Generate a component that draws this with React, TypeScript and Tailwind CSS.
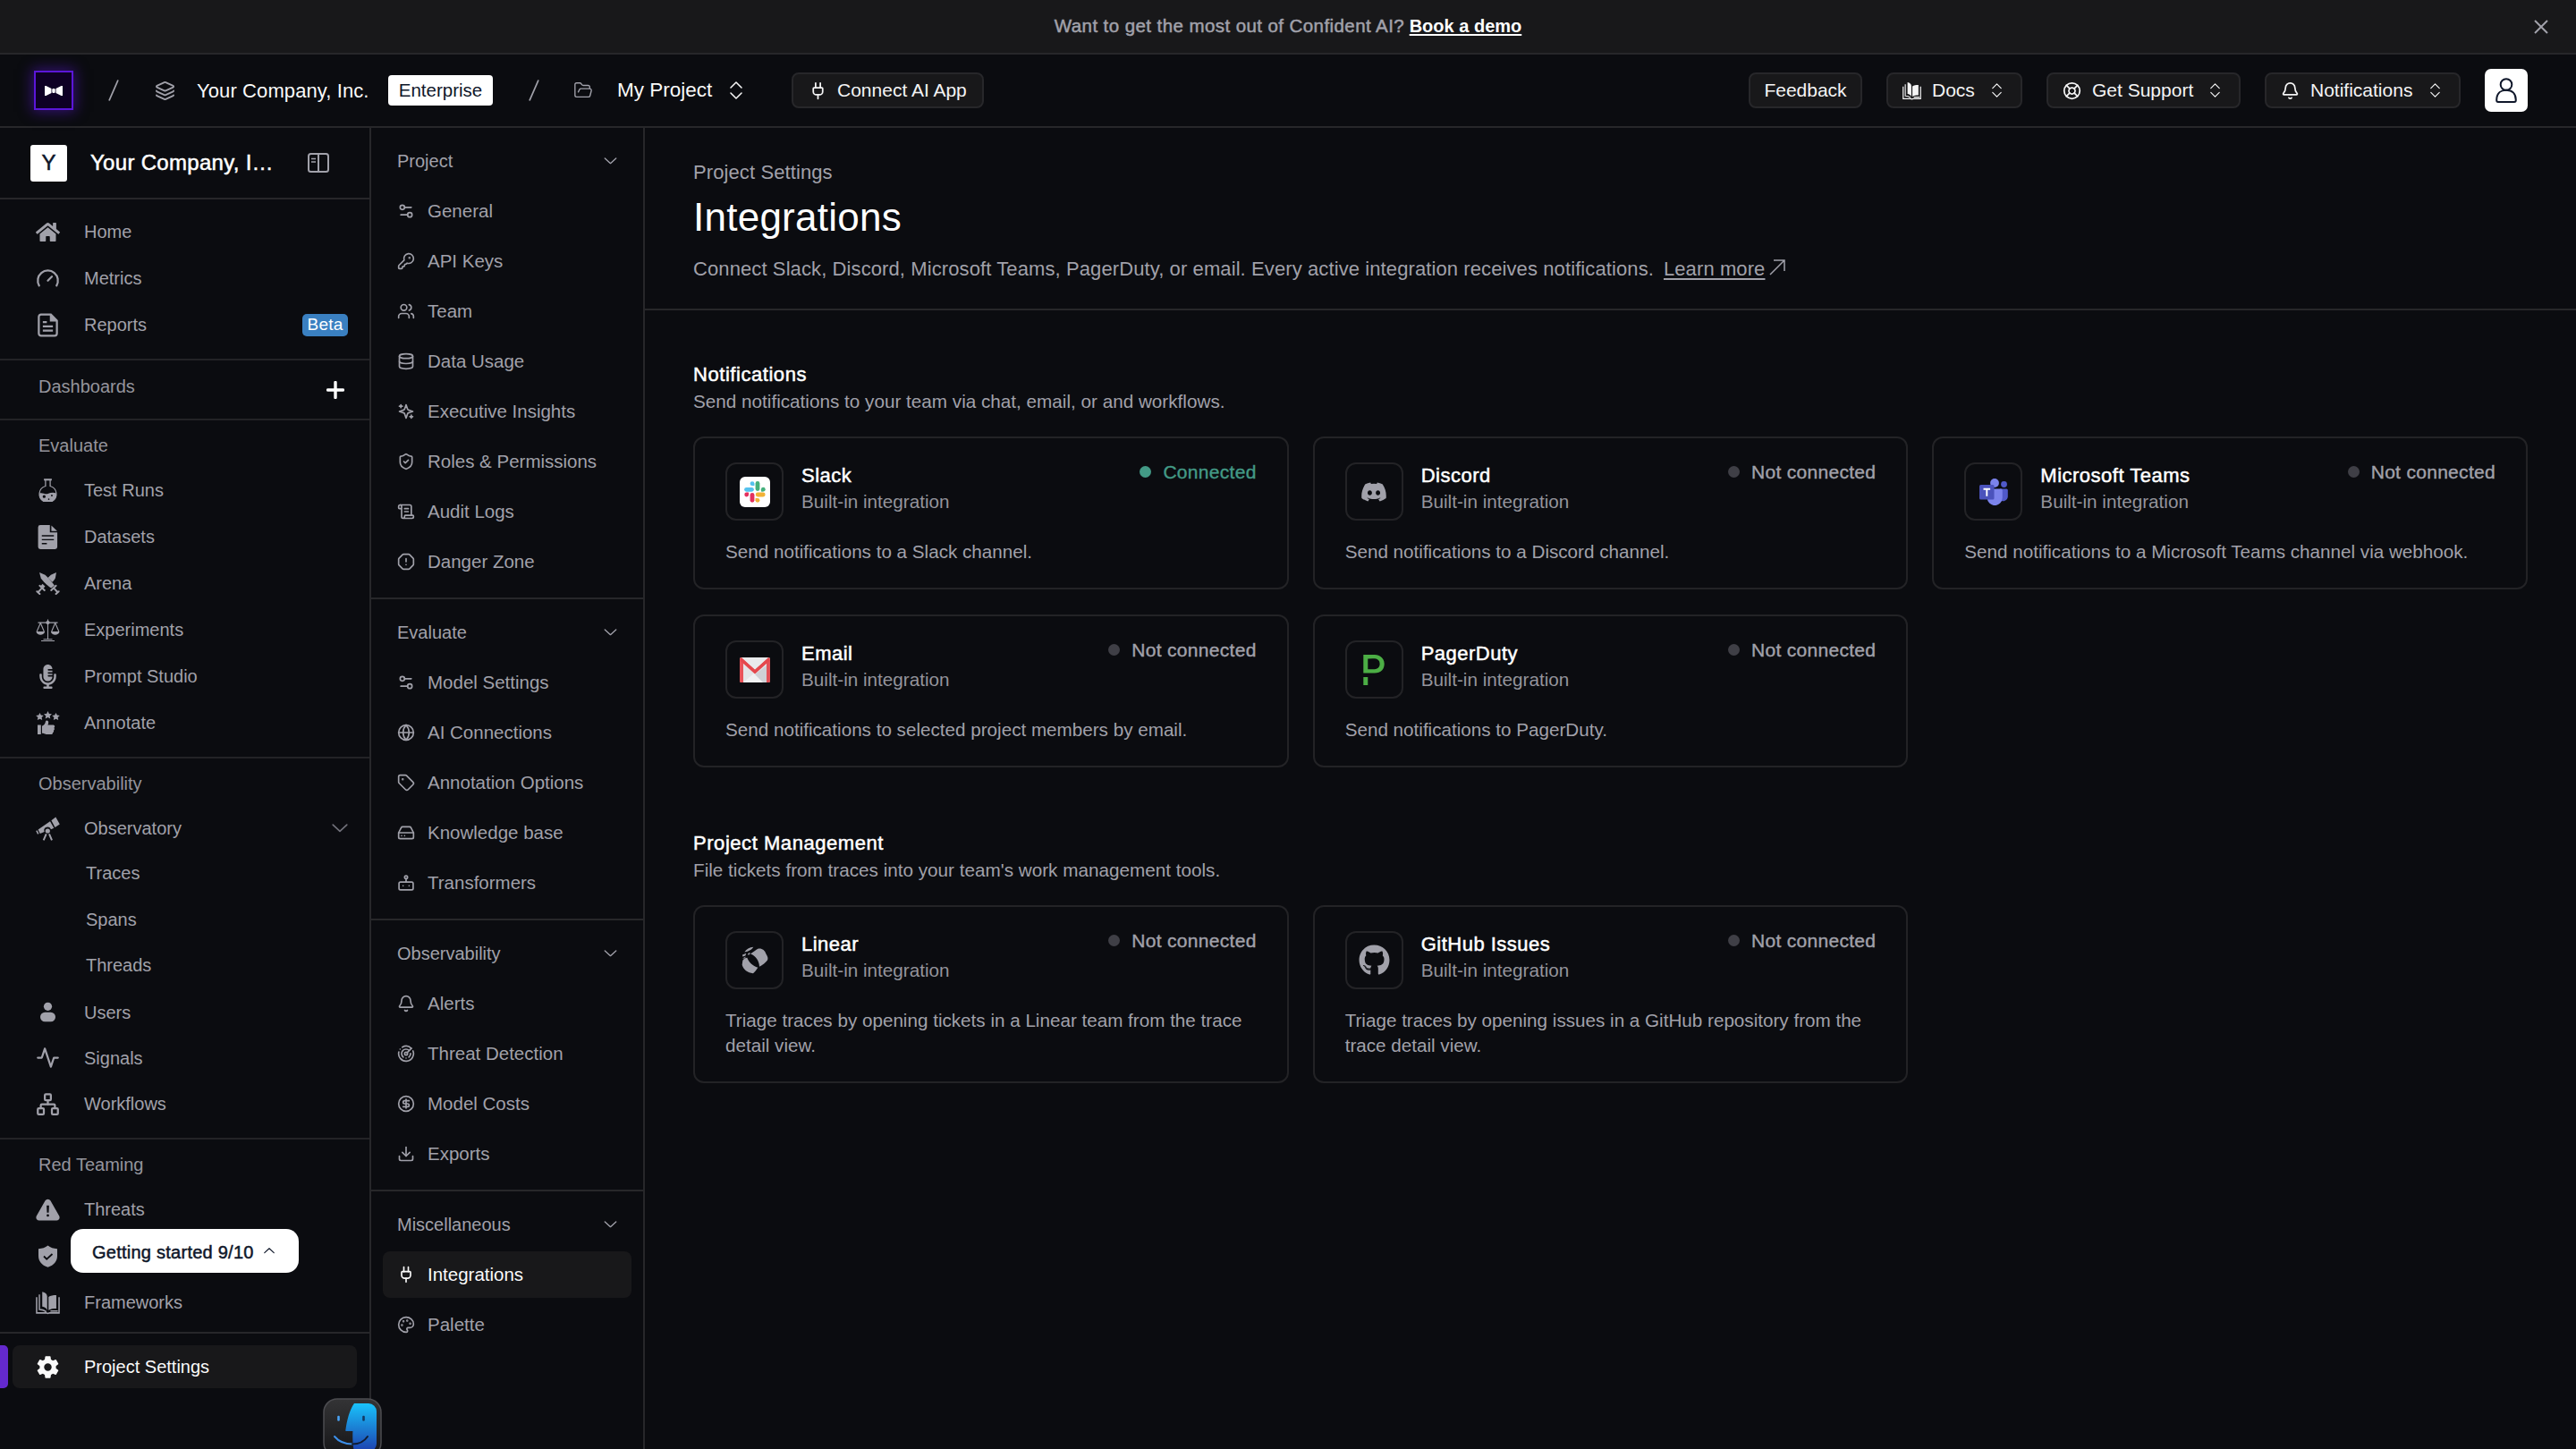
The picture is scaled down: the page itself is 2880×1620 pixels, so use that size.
import type { ComponentType, ReactNode } from "react";
import {
  Bell,
  CircleDollarSign,
  Database,
  Download,
  FolderOpen,
  Gauge,
  Globe,
  HardDrive,
  KeyRound,
  Layers,
  LifeBuoy,
  Network,
  OctagonAlert,
  Palette,
  Plug,
  Radar,
  ScrollText,
  Settings2,
  ShieldCheck,
  Tag,
  Users,
} from "lucide-react";
import { FaDiscord, FaGithub, FaHome, FaMicrophoneAlt } from "react-icons/fa";
import { IoSettingsSharp } from "react-icons/io5";
import { SiPagerduty } from "react-icons/si";

type Icon = ComponentType<{ className?: string }>;

interface NavItem {
  label: string;
  icon?: Icon;
  active?: boolean;
  badge?: string;
  sub?: boolean;
  expandable?: boolean;
}

interface NavGroup {
  title: string;
  items: NavItem[];
}

interface Integration {
  name: string;
  description: string;
  logo: ReactNode;
  connected?: boolean;
}

/* ---------- icons ---------- */

const ReportIcon: Icon = ({ className }) => (
  <svg viewBox="0 0 24 24" fill="none" stroke="currentColor" strokeWidth="2" className={className}>
    <path d="M15 1.500H5.200A2.200 2.200 0 0 0 3 3.700v16.600a2.200 2.200 0 0 0 2.200 2.200h13.600a2.200 2.200 0 0 0 2.200-2.200V7.500z" />
    <path d="M15 1.500v6h6M7 9h4M7 13.300h10M7 17.500h10" />
    <path d="M15.500 2v5H21Z" fill="currentColor" stroke="none" />
  </svg>
);

const FlaskIcon: Icon = ({ className }) => (
  <svg viewBox="0 0 26 26" className={className}>
    <path d="M8.800 1.200h8.400" stroke="currentColor" strokeWidth="2" />
    <path
      d="M10.500 2v6.200A8.800 8.800 0 0 0 8.600 24.500h8.800a8.800 8.800 0 0 0-1.900-16.300V2"
      fill="none"
      stroke="currentColor"
      strokeWidth="1.200"
    />
    <path
      fillRule="evenodd"
      d="M4 16c3-1.400 6 1.400 9 .4s6-1.800 9-.4c.6 3.800-1.400 7.500-4.600 9H8.600C5.400 23.500 3.400 20 4 16ZM9 17.800a1.600 1.600 0 1 0 .01 3.200A1.600 1.600 0 0 0 9 17.800Zm8.300-.4a.9.900 0 1 0 .01 1.800.9.900 0 0 0 0-1.800ZM14 21.500a.8.800 0 1 0 .01 1.600.8.800 0 0 0 0-1.600Z"
      fill="currentColor"
    />
  </svg>
);

const DatasetIcon: Icon = ({ className }) => (
  <svg viewBox="0 0 24 24" fill="currentColor" className={className}>
    <path
      fillRule="evenodd"
      d="M4.500 0H14v7.400h7.400v14.400A2.200 2.200 0 0 1 19.200 24H4.500A2.200 2.200 0 0 1 2.300 21.800V2.200A2.200 2.200 0 0 1 4.500 0ZM6 10v1.300h12V10Zm0 3.900v1.300h12v-1.300Zm0 3.900v1.300h5v-1.300Z"
    />
    <path d="m15.500.4 5.800 5.600h-5.800Z" />
  </svg>
);

const SwordsIcon: Icon = ({ className }) => (
  <svg viewBox="0 0 80 78" fill="currentColor" className={className}>
    <path d="M12 2 31 10C44 22 54 34 62 45L51 54C36 43 22 29 17 21Z" />
    <path d="M68 2 50 10 40 20 55 34C61 27 64 24 65 20Z" />
    <path d="m22 40 9 8-6 7-9-7Z" />
    <g stroke="currentColor" strokeWidth="6" strokeLinecap="round">
      <path d="M67 46 51 61M60 54 72 67M67 73l9-8M13 46 29 61M20 54 8 67M13 73l-9-8" />
    </g>
  </svg>
);

const ScalesIcon: Icon = ({ className }) => (
  <svg viewBox="0 0 27 26" fill="none" stroke="currentColor" strokeWidth="1.100" className={className}>
    <path d="M13.500 1v22.500M2.500 4.600h22M5.300 5 1.200 14.500M5.300 5l4 9.500M21.700 5l-4 9.500M21.700 5l4.100 9.500M8.500 23.300h10M6 25h15" />
    <path d="M.5 14.400h9.600c-.6 5-9 5-9.600 0ZM16.900 14.400h9.600c-.6 5-9 5-9.600 0Z" fill="currentColor" stroke="none" />
    <circle cx="13.500" cy="4.600" r="2.100" fill="currentColor" stroke="none" />
  </svg>
);

const AnnotateIcon: Icon = ({ className }) => (
  <svg viewBox="0 0 27 27" fill="currentColor" className={className}>
    <path d="m13.500 0 1.400 2.900 3.100.4-2.300 2.200.6 3.100-2.800-1.500-2.800 1.500.6-3.100L9 3.300l3.100-.4ZM4.500 1.900l1.300 2.700 3 .4-2.200 2.100.6 3-2.700-1.400-2.700 1.400.6-3L.2 5l3-.4ZM22.500 1.900l1.300 2.700 3 .4-2.200 2.100.6 3-2.700-1.400-2.700 1.400.6-3L18.200 5l3-.4Z" />
    <path d="M2 15.500h3.800V26H2ZM7 16.800c2.500-1 3.500-3 4-5.300.4-1.800 3.300-1.200 3.200 1.200 0 1-.4 1.900-.8 2.800h5.900c2 0 2.500 2.400 1.100 3.200.9 1 .5 2.400-.5 2.900.5 1.200 0 2.200-.9 2.600 0 1.300-.8 1.900-2.200 1.900h-3.600c-2.600 0-3.200-1-5-1.400H7Z" />
  </svg>
);

const TelescopeIcon: Icon = ({ className }) => (
  <svg viewBox="0 0 27 27" fill="currentColor" className={className}>
    <path d="M2.600 14.400 16 5.200l4.300 7.600-3.300 1.400a3.900 3.900 0 0 0-7.400 2.700l-4.800 2ZM17.400 4.200 22.300.4l4.500 8.200-5.300 3.500ZM.2 16.100l1.400-.8 1.900 3.800-1.500.7Z" />
    <circle cx="13.300" cy="16" r="2.600" />
    <path d="m11.700 19.300-3 7M15 19.300l3 7" stroke="currentColor" strokeWidth="2" />
  </svg>
);

const UserIcon: Icon = ({ className }) => (
  <svg viewBox="0 0 27 27" fill="currentColor" className={className}>
    <circle cx="13.500" cy="7.300" r="4.600" />
    <rect x="5" y="13.700" width="17" height="10.500" rx="5.200" />
  </svg>
);

const PulseIcon: Icon = ({ className }) => (
  <svg viewBox="0 0 24 24" fill="none" stroke="currentColor" strokeWidth="2" strokeLinejoin="round" strokeLinecap="round" className={className}>
    <path d="M22 12h-4l-3 9L9 3l-3 9H2" />
  </svg>
);

const WarningIcon: Icon = ({ className }) => (
  <svg viewBox="0 0 27 27" fill="currentColor" className={className}>
    <path
      fillRule="evenodd"
      d="M10.600 3.300a3.400 3.400 0 0 1 5.800 0l9.800 17.300c1.200 2.200-.4 4.900-2.900 4.900H3.700c-2.500 0-4.100-2.700-2.900-4.900Zm1.500 5.500.4 8h2l.4-8Zm1.400 9.700a1.400 1.400 0 1 0 .01 2.800 1.400 1.400 0 0 0 0-2.800Z"
    />
  </svg>
);

const ShieldIcon: Icon = ({ className }) => (
  <svg viewBox="0 0 27 27" className={className}>
    <path d="M13.500 1.500c3 2.400 6.300 3.500 10.500 3.700V13c0 6-3.500 10.500-10.500 12.800C6.500 23.500 3 19 3 13V5.200c4.200-.2 7.500-1.300 10.500-3.700Z" fill="currentColor" />
    <path d="m9 13.500 3.200 3.200L18.500 11" fill="none" stroke="#0b0c10" strokeWidth="1.800" />
  </svg>
);

const BooksIcon: Icon = ({ className }) => (
  <svg viewBox="0 0 28 27" className={className}>
    <path d="M7.500.8C11 1.500 13 3.400 13.200 6v16C12 19.600 10.300 18.500 7.500 18Z" fill="currentColor" />
    <path d="M14.800 6.800c2.200-1.400 5.300-2 9-2v15.400c-3.700 0-6.600.4-9 1.900Z" fill="currentColor" />
    <path d="M4.200 3.800v17.400c3.500 0 5.800.8 8 2.800" fill="none" stroke="currentColor" strokeWidth="1.500" />
    <path d="M1 7v18.300h11l2 .6 2-.6h11V7M25.500 23H17" fill="none" stroke="currentColor" strokeWidth="1.600" />
  </svg>
);

const SparklesIcon: Icon = ({ className }) => (
  <svg viewBox="0 0 24 24" fill="none" stroke="currentColor" strokeWidth="2" strokeLinecap="round" strokeLinejoin="round" className={className}>
    <path d="m12 3-1.912 5.813a2 2 0 0 1-1.275 1.275L3 12l5.813 1.912a2 2 0 0 1 1.275 1.275L12 21l1.912-5.813a2 2 0 0 1 1.275-1.275L21 12l-5.813-1.912a2 2 0 0 1-1.275-1.275L12 3Z" />
    <path d="M5 3v4M19 17v4M3 5h4M17 19h4" />
  </svg>
);

const RobotIcon: Icon = ({ className }) => (
  <svg viewBox="0 0 24 24" fill="none" stroke="currentColor" strokeWidth="2" strokeLinecap="round" className={className}>
    <rect x="2.500" y="11" width="19" height="10.500" rx="2" />
    <circle cx="12" cy="4.500" r="2" />
    <path d="M12 7v4M8 16v.01M16 16v.01" />
  </svg>
);

const SidebarIcon: Icon = ({ className }) => (
  <svg viewBox="0 0 24 22" fill="none" stroke="currentColor" strokeWidth="2" className={className}>
    <rect x="1" y="1" width="22" height="20" rx="2.500" />
    <path d="M12 1v20" />
    <path d="M4 6.500h5M4 10h5" strokeWidth="1.600" />
  </svg>
);

const Chevron: Icon = ({ className }) => (
  <svg viewBox="0 0 16 9" fill="none" stroke="currentColor" strokeWidth="1.500" strokeLinecap="round" strokeLinejoin="round" className={className}>
    <path d="m1 1 7 6.500L15 1" />
  </svg>
);

const UpDown: Icon = ({ className }) => (
  <svg viewBox="0 0 14 20" fill="none" stroke="currentColor" strokeWidth="1.500" strokeLinecap="round" strokeLinejoin="round" className={className}>
    <path d="m1 7 6-6 6 6M1 13l6 6 6-6" />
  </svg>
);

const Slash = ({ className }: { className?: string }) => (
  <svg viewBox="0 0 12 24" className={className}>
    <path d="M11 .5 1 23.500" stroke="#a1a1aa" strokeWidth="1.800" />
  </svg>
);

/* ---------- integration logos ---------- */

const SlackLogo = () => (
  <svg viewBox="0 0 34 34" className="size-[34px]">
    <rect width="34" height="34" rx="6" fill="#fff" />
    <g strokeWidth="4.800" strokeLinecap="round">
      <path d="M7.500 14.300h6" stroke="#55c2ee" />
      <path d="M20 7.500v6" stroke="#45b07c" />
      <path d="M20.200 20h6" stroke="#f2b237" />
      <path d="M14 20.300v6" stroke="#e4315f" />
    </g>
    <circle cx="14" cy="7.700" r="2.400" fill="#55c2ee" />
    <path d="M14 7.700h2.400v2.400H14Z" fill="#55c2ee" />
    <circle cx="26.300" cy="14.200" r="2.400" fill="#45b07c" />
    <path d="M23.900 14.200h2.400v2.400h-2.400Z" fill="#45b07c" />
    <circle cx="20" cy="26.300" r="2.400" fill="#f2b237" />
    <path d="M17.600 23.900H20v2.400h-2.400Z" fill="#f2b237" />
    <circle cx="7.700" cy="20" r="2.400" fill="#e4315f" />
    <path d="M7.700 17.600h2.400V20H7.700Z" fill="#e4315f" />
  </svg>
);

const GmailLogo = () => (
  <svg viewBox="0 0 34 28" className="h-[28px] w-[34px]">
    <rect width="34" height="28" rx="2" fill="#e4e5e7" />
    <path d="M4 28 17 17l13 11Z" fill="#f1f2f3" />
    <path d="M17 19 30 9v19H26Z" fill="#cfd1d6" />
    <path d="M0 2v24.500A1.500 1.500 0 0 0 1.500 28H4V5Z" fill="#e9545a" />
    <path d="M34 2v24.500a1.500 1.500 0 0 1-1.500 1.500H30V5Z" fill="#e25158" />
    <path d="M2 0C0 0-.4 2.500.8 4L17 18.500 33.200 4C34.400 2.500 34 0 32 0L17 13.500Z" fill="#e5484d" />
    <path d="M2.500.2h29L17 13.300Z" fill="#e9eaec" />
  </svg>
);

const TeamsLogo = () => (
  <svg viewBox="0 0 32 30" className="h-[30px] w-[32px]">
    <circle cx="27.500" cy="6.500" r="3.400" fill="#5059c9" />
    <circle cx="17" cy="5" r="4.900" fill="#7b83eb" />
    <path d="M23 11.500h7.300a1.500 1.500 0 0 1 1.500 1.500v7.200a5.400 5.400 0 0 1-8.800 3.800Z" fill="#5059c9" />
    <path d="M10 11.500h14.200a1.500 1.500 0 0 1 1.500 1.500v8.600a8.500 8.500 0 0 1-17 0V13Z" fill="#7b83eb" />
    <rect y="7" width="16.500" height="16.500" rx="1.600" fill="#4b53bc" />
    <path d="M4.500 11.700h7.600M8.300 11.700v8" stroke="#fff" strokeWidth="1.900" />
  </svg>
);

const LinearLogo = () => (
  <svg viewBox="0 0 90 92" fill="#a1a1aa" className="h-[31px] w-[30px]">
    <path d="M30 25C40 18 49 12 55 8C68 5 78 13 82 24C88 33 90 40 87 46C81 54 71 62 60 68C60 48 46 30 30 25Z" />
    <path d="M4 47C8 41 14 39 19 38C24 53 38 66 55 71C50 78 46 85 39 90C20 89 6 77 2 62Z" />
    <path d="M10 19C16 9 27 3 40 2C37 8 28 14 20 17ZM3 28 16 23 13 31 4 34ZM24 22 30 21 26 28 20 27ZM3 40 15 34 11 40Z" />
  </svg>
);

/* ---------- data ---------- */

const sidebarTop: NavItem[] = [
  { label: "Home", icon: FaHome },
  { label: "Metrics", icon: Gauge },
  { label: "Reports", icon: ReportIcon, badge: "Beta" },
];

const sidebarGroups: NavGroup[] = [
  {
    title: "Evaluate",
    items: [
      { label: "Test Runs", icon: FlaskIcon },
      { label: "Datasets", icon: DatasetIcon },
      { label: "Arena", icon: SwordsIcon },
      { label: "Experiments", icon: ScalesIcon },
      { label: "Prompt Studio", icon: FaMicrophoneAlt },
      { label: "Annotate", icon: AnnotateIcon },
    ],
  },
  {
    title: "Observability",
    items: [
      { label: "Observatory", icon: TelescopeIcon, expandable: true },
      { label: "Traces", sub: true },
      { label: "Spans", sub: true },
      { label: "Threads", sub: true },
      { label: "Users", icon: UserIcon },
      { label: "Signals", icon: PulseIcon },
      { label: "Workflows", icon: Network },
    ],
  },
  {
    title: "Red Teaming",
    items: [
      { label: "Threats", icon: WarningIcon },
      { label: "", icon: ShieldIcon },
      { label: "Frameworks", icon: BooksIcon },
    ],
  },
];

const settingsGroups: NavGroup[] = [
  {
    title: "Project",
    items: [
      { label: "General", icon: Settings2 },
      { label: "API Keys", icon: KeyRound },
      { label: "Team", icon: Users },
      { label: "Data Usage", icon: Database },
      { label: "Executive Insights", icon: SparklesIcon },
      { label: "Roles & Permissions", icon: ShieldCheck },
      { label: "Audit Logs", icon: ScrollText },
      { label: "Danger Zone", icon: OctagonAlert },
    ],
  },
  {
    title: "Evaluate",
    items: [
      { label: "Model Settings", icon: Settings2 },
      { label: "AI Connections", icon: Globe },
      { label: "Annotation Options", icon: Tag },
      { label: "Knowledge base", icon: HardDrive },
      { label: "Transformers", icon: RobotIcon },
    ],
  },
  {
    title: "Observability",
    items: [
      { label: "Alerts", icon: Bell },
      { label: "Threat Detection", icon: Radar },
      { label: "Model Costs", icon: CircleDollarSign },
      { label: "Exports", icon: Download },
    ],
  },
  {
    title: "Miscellaneous",
    items: [
      { label: "Integrations", icon: Plug, active: true },
      { label: "Palette", icon: Palette },
    ],
  },
];

const notifications: Integration[] = [
  { name: "Slack", description: "Send notifications to a Slack channel.", logo: <SlackLogo />, connected: true },
  {
    name: "Discord",
    description: "Send notifications to a Discord channel.",
    logo: <FaDiscord className="size-[30px] text-[#a1a1aa]" />,
  },
  {
    name: "Microsoft Teams",
    description: "Send notifications to a Microsoft Teams channel via webhook.",
    logo: <TeamsLogo />,
  },
  { name: "Email", description: "Send notifications to selected project members by email.", logo: <GmailLogo /> },
  {
    name: "PagerDuty",
    description: "Send notifications to PagerDuty.",
    logo: <SiPagerduty className="size-[34px] text-[#4cae45]" />,
  },
];

const projectManagement: Integration[] = [
  {
    name: "Linear",
    description: "Triage traces by opening tickets in a Linear team from the trace detail view.",
    logo: <LinearLogo />,
  },
  {
    name: "GitHub Issues",
    description: "Triage traces by opening issues in a GitHub repository from the trace detail view.",
    logo: <FaGithub className="size-[35px] text-[#a1a1aa]" />,
  },
];

/* ---------- layout ---------- */

function Banner() {
  return (
    <div className="relative flex h-[61px] shrink-0 items-center justify-center border-b-2 border-[#27272a] bg-[#18181a] text-[20px] text-[#a1a1aa]">
      <p>
        <span className="text-[20.500px] tracking-[0.42px] [-webkit-text-stroke:0.5px]">
          Want to get the most out of Confident AI?
        </span>{" "}
        <a className="font-bold text-white underline decoration-2 underline-offset-2">Book a demo</a>
      </p>
      <svg viewBox="0 0 16 16" className="absolute top-[22px] right-[31px] size-4">
        <path d="m1 1 14 14M15 1 1 15" stroke="#a1a1aa" strokeWidth="2" />
      </svg>
    </div>
  );
}

function HeaderButton({ icon, label, menu, className }: { icon?: ReactNode; label: string; menu?: boolean; className: string }) {
  return (
    <button
      className={`flex h-10 shrink-0 items-center rounded-lg border-2 border-[#27272a] bg-[#18181a] text-[21px] whitespace-nowrap text-[#f4f4f5] ${className}`}
    >
      {icon}
      {label}
      {menu && <UpDown className="ml-auto h-[16px] w-[11px]" />}
    </button>
  );
}

function Header() {
  return (
    <header className="flex h-[82px] shrink-0 items-center border-b-2 border-[#27272a] pr-[54px] pl-[38px] text-[22px] whitespace-nowrap text-[#fafafa]">
      <div className="flex size-11 items-center justify-center border-2 border-[#5b16d8] bg-[#0e0024] shadow-[0_0_14px_2px_rgba(91,22,216,0.5)]">
        <svg viewBox="0 0 20 11" fill="#fff" className="h-[11px] w-5">
          <path d="M0 0h1.500l6 3v5l-6 3H0ZM20 0h-1.500l-6 3v5l6 3H20Z" />
          <rect x="8.300" y="3" width="3.400" height="5" rx="1.200" />
        </svg>
      </div>
      <Slash className="ml-[39px] h-6 w-3" />
      <Layers strokeWidth={1.900} className="ml-[40px] size-[23px] text-[#a1a1aa]" />
      <span className="ml-[24px] w-[214px] tracking-[0.1px]">Your Company, Inc.</span>
      <span className="flex h-[34px] w-[117px] items-center justify-center rounded-[4px] bg-white text-[20.500px] text-[#0f172a]">
        Enterprise
      </span>
      <Slash className="ml-[40px] h-6 w-3" />
      <FolderOpen strokeWidth={1.500} className="ml-[38px] size-[22px] text-[#a1a1aa]" />
      <span className="ml-[27px] w-[126px] text-[22.500px]">My Project</span>
      <UpDown className="h-[20px] w-[14px]" />
      <HeaderButton
        icon={<Plug className="mr-[11px] size-[21px]" />}
        label="Connect AI App"
        className="ml-[55px] w-[215px] pl-[17px]"
      />

      <div className="ml-auto flex items-center gap-[27px]">
        <HeaderButton label="Feedback" className="w-[127px] justify-center" />
        <HeaderButton icon={<BooksIcon className="mr-3 size-[21px]" />} label="Docs" menu className="w-[152px] pr-[21px] pl-4" />
        <HeaderButton icon={<LifeBuoy className="mr-[12px] size-[21px]" />} label="Get Support" menu className="w-[217px] pr-[21px] pl-4" />
        <HeaderButton icon={<Bell className="mr-[12px] size-[21px]" />} label="Notifications" menu className="w-[219px] pr-[21px] pl-4" />
        <div className="flex size-12 items-center justify-center rounded-[7px] bg-white">
          <svg viewBox="0 0 24 28" fill="none" stroke="#0f172a" strokeWidth="2" strokeLinejoin="round" className="h-7 w-6">
            <circle cx="12" cy="7.500" r="6.300" />
            <path d="M1.200 25c0-7 4-11.200 10.800-11.200S22.800 18 22.800 25c0 1.300-.6 1.900-1.800 1.900H3c-1.200 0-1.800-.6-1.800-1.900Z" />
          </svg>
        </div>
      </div>
    </header>
  );
}

function SidebarRow({ item }: { item: NavItem }) {
  const ItemIcon = item.icon;
  return (
    <div
      className={`flex h-12 shrink-0 items-center rounded-lg text-[20px] ${
        item.active ? "bg-[#18181a] text-[#fafafa]" : "text-[#a1a1aa]"
      }`}
    >
      <span className="ml-[26px] flex w-[27px] justify-center">{ItemIcon && <ItemIcon className="size-[27px]" />}</span>
      <span className={item.sub ? "ml-[29px] pb-0.5" : "ml-[27px]"}>{item.label}</span>
      {item.badge && (
        <span className="mr-[10px] ml-auto flex h-[25px] w-[51px] items-center justify-center rounded-[5px] bg-[#3a80c1] text-[19px] tracking-[0.2px] text-white">
          {item.badge}
        </span>
      )}
      {item.expandable && <Chevron className="mr-[10px] ml-auto h-[10px] w-[18px] text-[#71717a]" />}
    </div>
  );
}

function Sidebar() {
  return (
    <aside className="flex w-[415px] shrink-0 flex-col border-r-2 border-[#27272a]">
      <div className="flex h-20 shrink-0 items-center border-b-2 border-[#27272a] pr-[45px] pl-[34px]">
        <span className="flex size-[41px] items-center justify-center rounded-[3px] bg-white text-[24px] text-[#0f172a] [-webkit-text-stroke:0.5px]">
          Y
        </span>
        <span className="ml-[26px] text-[24px] tracking-[0.3px] text-white [-webkit-text-stroke:0.5px]">
          Your Company, I…
        </span>
        <SidebarIcon className="ml-auto h-[22px] w-6 text-[#a1a1aa]" />
      </div>

      <nav className="flex min-h-0 flex-1 flex-col">
        <div className="flex shrink-0 flex-col gap-1 border-b-2 border-[#232326] px-[14px] pt-[12px] pb-[14px]">
          {sidebarTop.map((item) => (
            <SidebarRow key={item.label} item={item} />
          ))}
        </div>
        <div className="flex h-[67px] shrink-0 items-center justify-between border-b-2 border-[#232326] pr-[28px] pl-[43px] text-[20px] text-[#94949c]">
          <span className="pb-2">Dashboards</span>
          <svg viewBox="0 0 20 20" className="size-5">
            <path d="M10 1.500v17M1.500 10h17" stroke="#fff" strokeWidth="3.400" strokeLinecap="round" />
          </svg>
        </div>
        {sidebarGroups.map((group, i) => (
          <div
            key={group.title}
            className={`flex shrink-0 flex-col ${i < sidebarGroups.length - 1 ? "border-b-2 border-[#232326]" : ""} px-[14px] pb-[14px]`}
          >
            <p className="flex h-[54px] items-center pt-0.5 pl-[29px] text-[20px] text-[#94949c]">{group.title}</p>
            <div className={`flex flex-col ${group.title === "Observability" ? "gap-[3.400px]" : "gap-1"}`}>
              {group.items.map((item) => (
                <SidebarRow key={item.label} item={item} />
              ))}
            </div>
          </div>
        ))}
      </nav>

      <div className="relative z-10 h-[131px] shrink-0 border-t-2 border-[#27272a] bg-[#0b0c10] px-[14px] pt-[13px]">
        <span className="absolute top-[13px] left-0 h-12 w-[9px] rounded-r-[5px] bg-[#6429cd]" />
        <SidebarRow item={{ label: "Project Settings", icon: IoSettingsSharp, active: true }} />
      </div>
    </aside>
  );
}

function SettingsNav() {
  return (
    <aside className="w-[306px] shrink-0 border-r-2 border-[#27272a]">
      {settingsGroups.map((group, i) => (
        <section
          key={group.title}
          className={`px-[13px] pt-[11px] pb-[14px] ${i < settingsGroups.length - 1 ? "border-b-2 border-[#27272a]" : ""}`}
        >
          <div className="flex h-[52px] items-center justify-between pr-4 pl-4 text-[20px] text-[#a1a1aa]">
            {group.title}
            <Chevron className="h-[8px] w-[15px]" />
          </div>
          <div className="mt-1 flex flex-col gap-1">
            {group.items.map(({ label, icon: ItemIcon, active }) => (
              <div
                key={label}
                className={`flex h-[52px] items-center rounded-lg pl-[16px] text-[20.500px] ${
                  active ? "bg-[#18181a] text-[#fafafa]" : "text-[#a1a1aa]"
                }`}
              >
                {ItemIcon && <ItemIcon className="mr-[14px] size-5" />}
                {label}
              </div>
            ))}
          </div>
        </section>
      ))}
    </aside>
  );
}

function IntegrationCard({ name, description, logo, connected }: Integration) {
  return (
    <article className="rounded-xl border-2 border-[#232326] px-[34px] pt-[27px] pb-[26px]">
      <div className="flex h-[66px] items-start">
        <span className="flex size-[65px] shrink-0 items-center justify-center rounded-xl border-2 border-[#232326]">
          {logo}
        </span>
        <div className="ml-[20px]">
          <h3 className="text-[22px] leading-[30px] tracking-[0.5px] text-white [-webkit-text-stroke:0.5px]">{name}</h3>
          <p className="-mt-px text-[20.700px] leading-[30px] text-[#94949c]">Built-in integration</p>
        </div>
        <p
          className={`-mt-px ml-auto flex items-center text-[21px] leading-[24px] tracking-[0.3px] [-webkit-text-stroke:0.4px] ${
            connected ? "text-[#439a86]" : "text-[#a1a1aa]"
          }`}
        >
          <span
            className={`mr-[13px] mb-0.5 size-[13px] rounded-full ${connected ? "bg-[#439a86]" : "bg-[#3f3f46]"}`}
          />
          {connected ? "Connected" : "Not connected"}
        </p>
      </div>
      <p className="mt-[20px] text-[20.650px] leading-[28px] text-[#a1a1aa]">{description}</p>
    </article>
  );
}

function IntegrationSection({ title, subtitle, items }: { title: string; subtitle: string; items: Integration[] }) {
  return (
    <section>
      <h2 className="text-[22px] leading-[30px] tracking-[0.55px] text-white [-webkit-text-stroke:0.5px]">{title}</h2>
      <p className="text-[20.700px] leading-[30px] text-[#a1a1aa]">{subtitle}</p>
      <div className="mt-[24px] grid grid-cols-3 gap-x-[27px] gap-y-[28px]">
        {items.map((item) => (
          <IntegrationCard key={item.name} {...item} />
        ))}
      </div>
    </section>
  );
}

function Main() {
  return (
    <main className="min-w-0 flex-1">
      <div className="h-[204px] border-b-2 border-[#27272a] pt-[34px] pl-[54px] text-[22px] text-[#a1a1aa]">
        <p className="leading-[32px] tracking-[0.1px]">Project Settings</p>
        <h1 className="mt-[6px] text-[44px] leading-[56px] tracking-[0.25px] text-white">Integrations</h1>
        <p className="mt-[14px] flex items-center leading-[32px] tracking-[0.1px]">
          Connect Slack, Discord, Microsoft Teams, PagerDuty, or email. Every active integration receives notifications.
          <a className="ml-[11px] underline decoration-2 underline-offset-[3px]">Learn more</a>
          <svg viewBox="0 0 18 18" fill="none" stroke="#a1a1aa" strokeWidth="1.500" className="-mt-1 ml-[5px] size-[18px]">
            <path d="M1 17 17 1M5 1h12v12" />
          </svg>
        </p>
      </div>
      <div className="flex flex-col gap-[70px] pt-[57px] pr-[54px] pl-[54px]">
        <IntegrationSection
          title="Notifications"
          subtitle="Send notifications to your team via chat, email, or and workflows."
          items={notifications}
        />
        <IntegrationSection
          title="Project Management"
          subtitle="File tickets from traces into your team's work management tools."
          items={projectManagement}
        />
      </div>
    </main>
  );
}

function FinderIcon() {
  return (
    <svg viewBox="0 0 66 66" className="absolute top-[1563px] left-[361px] z-20 size-[66px]">
      <defs>
        <linearGradient id="face" x1="0" y1="0" x2="0" y2="1">
          <stop offset="0" stopColor="#19c3fb" />
          <stop offset="1" stopColor="#1d3fae" />
        </linearGradient>
        <linearGradient id="shell" x1="0" y1="0" x2="0" y2="1">
          <stop offset="0" stopColor="#343436" />
          <stop offset="1" stopColor="#151517" />
        </linearGradient>
      </defs>
      <rect x="1" y="1" width="64" height="64" rx="15" fill="url(#shell)" stroke="#4c4c50" strokeWidth="1.500" />
      <path d="M35 6h16a9 9 0 0 1 9 9v36a9 9 0 0 1-9 9H35c-1.500-6-2-14-1.600-23h-7.200c-.8 0-1-.6-.8-1.400C27 24 30 13 35 6Z" fill="url(#face)" />
      <path d="M17.500 21v3.500" stroke="#4aa3f5" strokeWidth="2.600" strokeLinecap="round" />
      <path d="M45.500 21v3.500" stroke="#123a63" strokeWidth="2.600" strokeLinecap="round" />
      <path d="M13 43c5 6 12 8.500 20 8.500" fill="none" stroke="#3d8fe8" strokeWidth="2" strokeLinecap="round" />
      <path d="M33 51.500c7 0 13-2.500 17-8.500" fill="none" stroke="#101c33" strokeWidth="2" strokeLinecap="round" />
    </svg>
  );
}

export default function App() {
  return (
    <div className="relative flex h-[1620px] w-full flex-col overflow-hidden bg-[#0b0c10] font-['Liberation_Sans',Arial,sans-serif]">
      <Banner />
      <Header />
      <div className="flex min-h-0 flex-1">
        <Sidebar />
        <SettingsNav />
        <Main />
      </div>

      <button className="absolute top-[1374px] left-[79px] z-20 flex h-[49px] w-[255px] items-center rounded-[14px] bg-white pt-0.5 pl-[24px] text-[20px] tracking-[0.25px] text-[#0f172a] [-webkit-text-stroke:0.5px]">
        Getting started 9/10
        <Chevron className="mb-1 ml-[11px] h-[8px] w-[12px] rotate-180" />
      </button>
      <FinderIcon />
    </div>
  );
}
